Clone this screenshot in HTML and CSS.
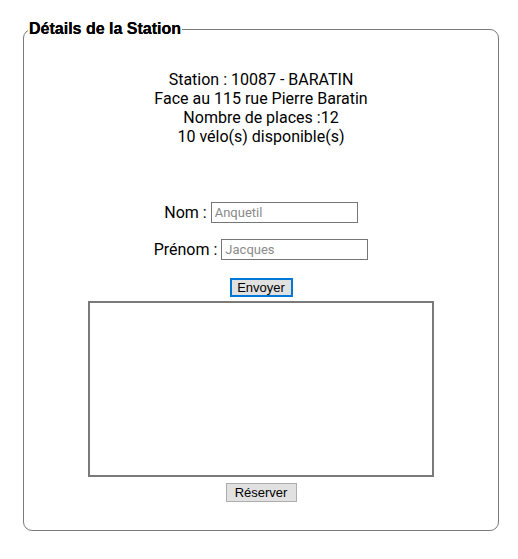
FILE: index.html
```html
<!DOCTYPE html>
<html lang="fr">
<head>
<meta charset="utf-8">
<title>Détails de la Station</title>
<link rel="stylesheet" href="styles.css">
</head>
<body>
<fieldset class="station">
  <legend class="station-title">Détails de la Station</legend>
  <div class="info">
    <div>Station : 10087 - BARATIN</div>
    <div>Face au 115 rue Pierre Baratin</div>
    <div>Nombre de places :12</div>
    <div>10 vélo(s) disponible(s)</div>
  </div>
  <form class="form">
    <div class="row"><label>Nom :</label><input class="field" type="text" placeholder="Anquetil"></div>
    <div class="row row-2"><label>Prénom :</label><input class="field" type="text" placeholder="Jacques"></div>
    <button type="button" class="btn btn-focus">Envoyer</button>
    <div class="canvas"></div>
    <button type="button" class="btn btn-reserve">Réserver</button>
  </form>
</fieldset>
</body>
</html>
```
FILE: styles.css
```css
html, body {
  margin: 0;
  padding: 0;
  background: #fff;
}
body {
  padding: 20px 20px 0 23px;
  font-family: Roboto, "Liberation Sans", sans-serif;
  color: #000;
}
.station {
  margin: 0;
  padding: 0 0 28px 4px;
  border: 1px solid #7a7a7a;
  border-radius: 9px;
  width: 476px;
  box-sizing: border-box;
  min-width: 0;
}
.station-title {
  padding: 0 1px;
  font-family: "Liberation Sans", Arial, sans-serif;
  font-weight: bold;
  font-size: 16px;
  line-height: 18px;
  color: #000;
  text-shadow: 0 0 0.5px #000;
}
.info {
  margin-top: 32px;
  margin-right: 4px;
  text-align: center;
  font-size: 16px;
  line-height: 19px;
}
.form {
  margin: 56px 4px 0 0;
  display: flex;
  flex-direction: column;
  align-items: center;
}
.row {
  display: flex;
  align-items: center;
  gap: 4px;
  height: 21px;
  font-size: 16px;
}
.row-2 {
  margin-top: 16px;
}
.field {
  width: 147px;
  height: 21px;
  box-sizing: border-box;
  border: 1px solid #767676;
  padding: 1px 3px;
  margin: 0;
  font-family: Roboto, "Liberation Sans", sans-serif;
  font-size: 13px;
  background: #fff;
}
.field::placeholder {
  color: #8a8a8a;
}
.btn {
  margin: 0;
  box-sizing: border-box;
  height: 19px;
  padding: 0 7px;
  font-family: "Liberation Sans", Arial, sans-serif;
  font-size: 13px;
  line-height: 15px;
  color: #000;
  background: #e1e1e1;
  border: 1px solid #adadad;
  border-radius: 0;
}
.btn-focus {
  margin-top: 18px;
  width: 63px;
  border: 2px solid #0078d7;
  padding: 0;
}
.canvas {
  margin-top: 4px;
  width: 346px;
  height: 176px;
  box-sizing: border-box;
  border: 2px solid #7a7a7a;
  background: #fff;
}
.btn-reserve {
  margin-top: 6px;
  width: 71px;
  padding: 0;
}
```
